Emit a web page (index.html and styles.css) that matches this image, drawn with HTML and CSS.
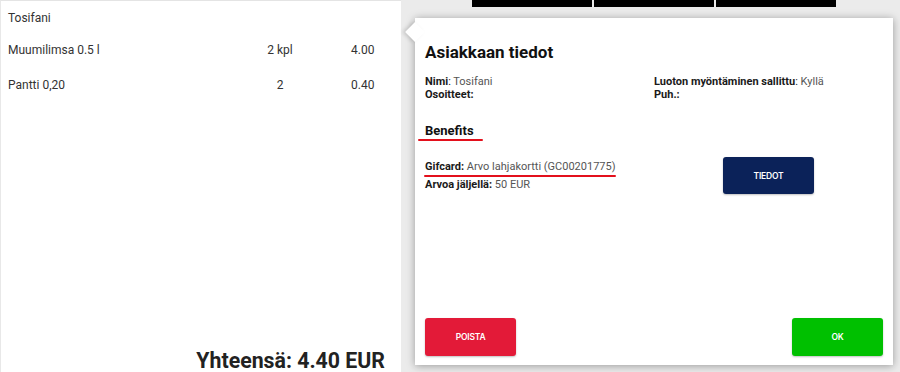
FILE: index.html
```html
<!DOCTYPE html>
<html lang="fi">
<head>
<meta charset="utf-8">
<title>Asiakkaan tiedot</title>
<link rel="stylesheet" href="styles.css">
</head>
<body>
<div class="screen">
  <section class="receipt">
    <div class="customer">Tosifani</div>
    <div class="row">
      <span class="name">Muumilimsa 0.5 l</span>
      <span class="qty">2 kpl</span>
      <span class="price">4.00</span>
    </div>
    <div class="row">
      <span class="name">Pantti 0,20</span>
      <span class="qty">2</span>
      <span class="price">0.40</span>
    </div>
    <div class="total">Yhteensä: 4.40 EUR</div>
  </section>
  <section class="side">
    <div class="tabs">
      <div class="tab"></div>
      <div class="tab"></div>
      <div class="tab"></div>
    </div>
  </section>

  <div class="popover">
    <h1 class="title">Asiakkaan tiedot</h1>
    <div class="info">
      <div class="col">
        <div><b>Nimi</b>: <span class="val">Tosifani</span></div>
        <div><b>Osoitteet:</b></div>
      </div>
      <div class="col">
        <div><b>Luoton myöntäminen sallittu</b>: <span class="val">Kyllä</span></div>
        <div><b>Puh.:</b></div>
      </div>
    </div>
    <h2 class="benefits"><span class="mark mark-benefits">Benefits</span></h2>
    <div class="benefit">
      <div class="benefit-text">
        <div class="gift"><span class="mark mark-gift"><b>Gifcard:</b> <span class="val">Arvo lahjakortti (GC00201775)</span></span></div>
        <div class="left"><b>Arvoa jäljellä:</b> <span class="val">50 EUR</span></div>
      </div>
      <button class="btn btn-navy">TIEDOT</button>
    </div>
    <div class="footer">
      <button class="btn btn-red">POISTA</button>
      <button class="btn btn-green">OK</button>
    </div>
  </div>
</div>
</body>
</html>
```

FILE: styles.css
```css
* { box-sizing: border-box; }
html, body {
  margin: 0;
  padding: 0;
  width: 900px;
  height: 372px;
  overflow: hidden;
  background: #ebebeb;
  font-family: Roboto, "Liberation Sans", sans-serif;
}
.screen {
  position: relative;
  display: flex;
  width: 900px;
  height: 372px;
}
.receipt {
  width: 401px;
  height: 372px;
  background: #fff;
  display: flex;
  flex-direction: column;
  color: #333;
  font-size: 12px;
  border-top: 1px solid #e4e4e4;
  border-left: 1px solid #e8e8e8;
}
.customer {
  padding: 10px 7px 0;
  height: 31px;
  line-height: 14px;
}
.row {
  display: grid;
  grid-template-columns: 227px 90px 75px;
  height: 35px;
  align-items: center;
  padding-left: 7px;
}
.qty { text-align: center; }
.price { padding-left: 26px; }
.total {
  margin-top: auto;
  text-align: right;
  padding-right: 16px;
  font-size: 21.3px;
  font-weight: 700;
  line-height: 24px;
  color: #222;
  height: 23px;
  overflow: visible;
}
.side {
  flex: 1;
  padding-left: 71px;
}
.tabs {
  display: flex;
  gap: 2px;
}
.tab {
  width: 120px;
  height: 7px;
  background: #000;
}

.popover {
  position: absolute;
  left: 415px;
  top: 18px;
  width: 478px;
  height: 347px;
  background: #fff;
  box-shadow: 0 1px 8px rgba(0,0,0,0.35);
  padding: 24px 10px 9px 10px;
  display: flex;
  flex-direction: column;
  color: #222;
}
.popover::before {
  content: "";
  position: absolute;
  left: -7px;
  top: 7px;
  width: 14px;
  height: 14px;
  background: #fff;
  transform: rotate(45deg);
  box-shadow: -2px 2px 4px rgba(0,0,0,0.15);
}
.title {
  position: relative;
  margin: 0;
  font-size: 17px;
  line-height: 20px;
  font-weight: 700;
  color: #111;
}
.info {
  margin-top: 13px;
  display: grid;
  grid-template-columns: 229px 1fr;
  font-size: 11px;
  line-height: 13px;
}
b { font-weight: 700; color: #1a1a1a; }
.val { color: #555; }
.benefits {
  margin: 22px 0 0;
  font-size: 13px;
  line-height: 16px;
  font-weight: 700;
  color: #111;
}
.mark { position: relative; }
.mark::after {
  content: "";
  position: absolute;
  height: 2px;
  background: #e3101c;
  border-radius: 1px;
}
.mark-benefits::after {
  left: -7px;
  right: -9px;
  bottom: -3px;
}
.mark-gift::after {
  left: -1px;
  right: 0;
  bottom: -4px;
}
.benefit {
  margin-top: 19px;
  display: flex;
  align-items: flex-start;
}
.benefit-text {
  width: 298px;
  font-size: 11px;
}
.gift { line-height: 18px; }
.left { line-height: 18px; }
.btn {
  border: none;
  border-radius: 3px;
  width: 91px;
  height: 38px;
  color: #fff;
  font-family: Inter, "DejaVu Sans", sans-serif;
  font-weight: 600;
  font-size: 8.5px;
  letter-spacing: -0.2px;
  padding: 0;
  box-shadow: 0 1px 2px rgba(0,0,0,0.25);
}
.btn-navy {
  background: #0b2259;
  height: 37px;
  margin-top: -1px;
}
.btn-red { background: #e31a38; }
.btn-green { background: #00c000; }
.footer {
  margin-top: auto;
  display: flex;
  justify-content: space-between;
}
```
